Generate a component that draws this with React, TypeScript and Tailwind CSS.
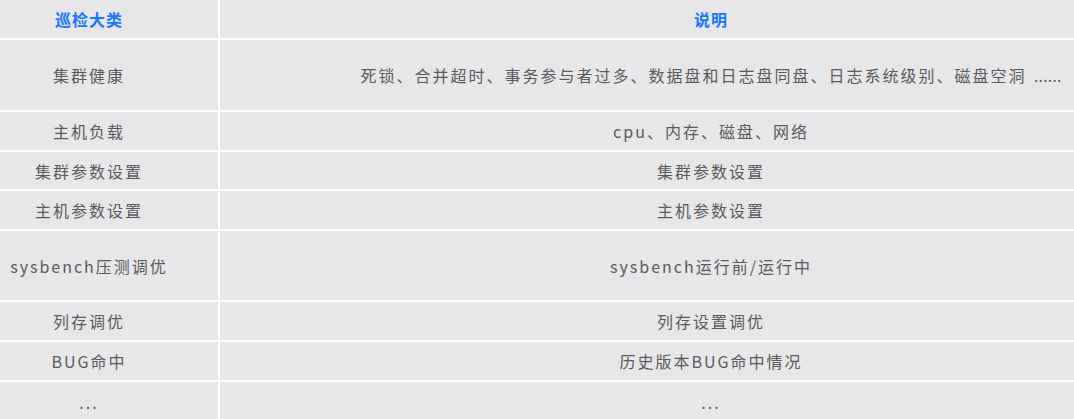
import React from 'react';

const rows: { name: string; desc: React.ReactNode; h: string }[] = [
  {
    name: '集群健康',
    desc: (
      <>
        死锁、合并超时、事务参与者过多、数据盘和日志盘同盘、日志系统级别、磁盘空洞{' '}
        <span className="font-['Noto_Sans'] tracking-[0.3px] ml-[2px]">......</span>
      </>
    ),
    h: 'h-[70px]',
  },
  { name: '主机负载', desc: 'cpu、内存、磁盘、网络', h: 'h-[38px]' },
  { name: '集群参数设置', desc: '集群参数设置', h: 'h-[37px]' },
  { name: '主机参数设置', desc: '主机参数设置', h: 'h-[38px]' },
  { name: 'sysbench压测调优', desc: 'sysbench运行前/运行中', h: 'h-[69px]' },
  { name: '列存调优', desc: '列存设置调优', h: 'h-[38px]' },
  { name: 'BUG命中', desc: '历史版本BUG命中情况', h: 'h-[38px]' },
  { name: '...', desc: '...', h: 'h-[40px]' },
];

export default function App() {
  return (
    <div
      className="w-[1074px] h-[419px] overflow-hidden bg-white"
      style={{ fontFamily: '"Noto Sans CJK SC", "Noto Sans", sans-serif' }}
    >
      <div className="grid grid-cols-[218px_1fr] gap-[2px]">
        {/* Header */}
        <div className="h-[38px] bg-[#e7e7ea] flex items-center justify-center pr-[40px] text-[16px] font-bold tracking-[1px] text-[#1677ff]">
          巡检大类
        </div>
        <div className="h-[38px] bg-[#e7e7ea] flex items-center justify-center pl-[128px] text-[16px] font-bold tracking-[1px] text-[#1677ff]">
          说明
        </div>

        {rows.map((r, i) => (
          <React.Fragment key={i}>
            <div className={`${r.h} bg-[#e7e7ea] flex items-center justify-center pr-[40px] text-[16px] tracking-[2px] text-[#5a5a5a] whitespace-nowrap`}>
              {r.name}
            </div>
            <div className={`${r.h} bg-[#e7e7ea] flex items-center justify-center pl-[128px] text-[16px] tracking-[2px] text-[#5a5a5a] whitespace-nowrap`}>
              <span>{r.desc}</span>
            </div>
          </React.Fragment>
        ))}
      </div>
    </div>
  );
}
